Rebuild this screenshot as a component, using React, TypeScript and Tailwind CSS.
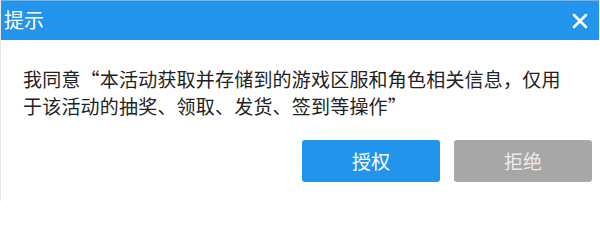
export default function App() {
  return (
    <div
      className="w-[600px] h-[201px] bg-white flex flex-col overflow-hidden border-l border-[#e6e6e6]"
      style={{ fontFamily: '"Noto Sans CJK SC", "Noto Sans", sans-serif' }}
    >
      <header className="h-[40px] shrink-0 bg-[#2294ec] border-t border-[#6cb8f2] border-b border-b-[#3a8fd3] flex items-center justify-between pl-[3px] pr-[11px] mr-[1px]">
        <h1 className="text-[20px] leading-none text-white">提示</h1>
        <svg width="16" height="16" viewBox="0 0 16 16" className="mt-[2px]">
          <path d="M2 2 L14 14 M14 2 L2 14" stroke="white" strokeWidth="2.6" strokeLinecap="round" />
        </svg>
      </header>

      <div className="pl-[22px] pr-[30px] pt-[25px]">
        <p className="text-[19px] leading-[27px] tracking-[0.2px] text-[#222]">
          我同意“本活动获取并存储到的游戏区服和角色相关信息，仅用于该活动的抽奖、领取、发货、签到等操作”
        </p>
      </div>

      <div className="flex justify-end gap-[14px] pr-[8px] mt-[21px]">
        <button className="w-[138px] h-[42px] rounded-[3px] bg-[#2294ec] text-white text-[19px]">授权</button>
        <button className="w-[138px] h-[42px] rounded-[3px] bg-[#a7a7a7] text-[#ececec] text-[19px]">拒绝</button>
      </div>
    </div>
  )
}
